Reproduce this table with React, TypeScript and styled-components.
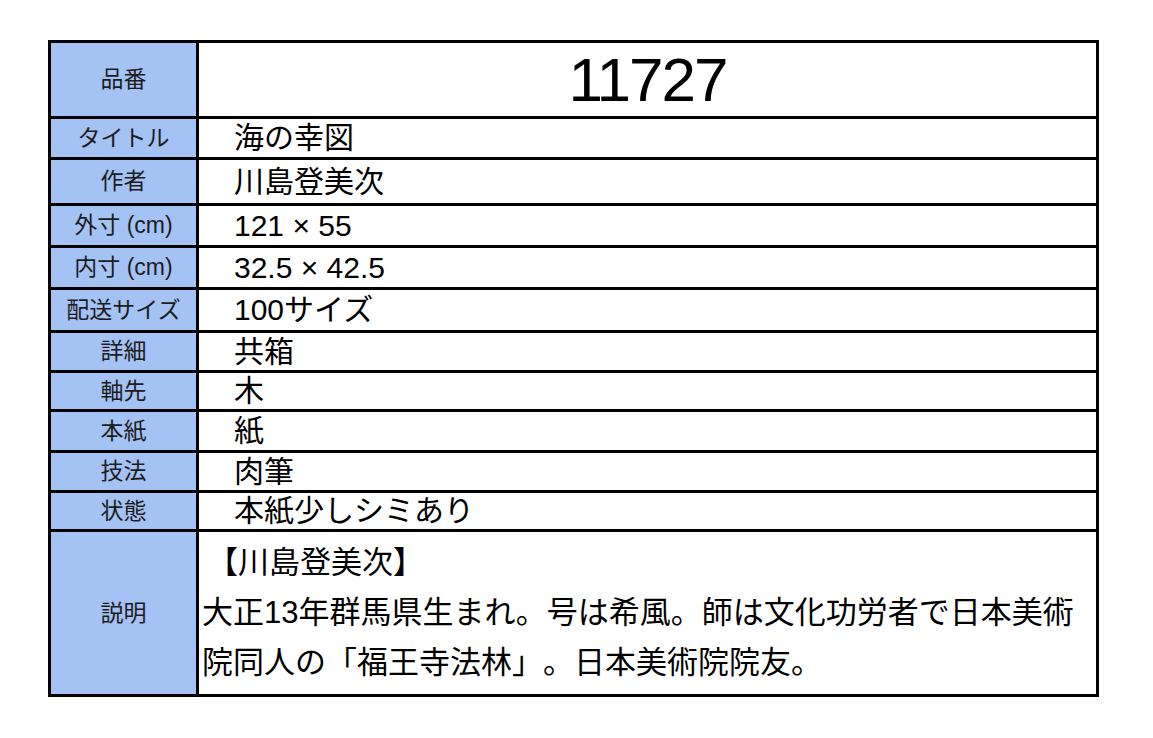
import React from "react";
import styled, { createGlobalStyle } from "styled-components";

const GlobalStyle = createGlobalStyle`
  html, body {
    margin: 0;
    padding: 0;
    background: #fff;
  }
  body {
    font-family: "Liberation Sans", "Noto Sans CJK JP", sans-serif;
    color: #000;
    text-spacing-trim: space-all;
  }
`;

type Row = { label: string; value: string; h: number };

const rows: Row[] = [
  { label: "タイトル", value: "海の幸図", h: 38 },
  { label: "作者", value: "川島登美次", h: 43 },
  { label: "外寸 (cm)", value: "121 × 55", h: 39 },
  { label: "内寸 (cm)", value: "32.5 × 42.5", h: 39 },
  { label: "配送サイズ", value: "100サイズ", h: 40 },
  { label: "詳細", value: "共箱", h: 37 },
  { label: "軸先", value: "木", h: 36 },
  { label: "本紙", value: "紙", h: 38 },
  { label: "技法", value: "肉筆", h: 37 },
  { label: "状態", value: "本紙少しシミあり", h: 36 },
];

const descLines = [
  "【川島登美次】",
  "大正13年群馬県生まれ。号は希風。師は文化功労者で日本美術",
  "院同人の「福王寺法林」。日本美術院院友。",
];

// heights of every row: number row, the plain rows, then the description
const rowHeights = [73, ...rows.map((r) => r.h), 162];

const App = () => {
  return (
    <Page>
      <GlobalStyle />
      <Sheet $rows={rowHeights}>
        <Label>品番</Label>
        <Number>11727</Number>

        {rows.map((r) => (
          <React.Fragment key={r.label}>
            <Label>{r.label}</Label>
            <Value>{r.value}</Value>
          </React.Fragment>
        ))}

        <Label>説明</Label>
        <Desc>
          {descLines.map((line, i) => (
            <DescLine key={line} $indent={i === 0 ? 5 : 0}>
              {line}
            </DescLine>
          ))}
        </Desc>
      </Sheet>
    </Page>
  );
};

export default App;

const Page = styled.div`
  padding: 40px 0 0 48px;
`;

const Sheet = styled.div<{ $rows: number[] }>`
  display: grid;
  grid-template-columns: 145px 897px;
  grid-template-rows: ${(p) => p.$rows.map((h) => `${h}px`).join(" ")};
  gap: 3px;
  padding: 3px;
  width: fit-content;
  background-color: #000;
`;

const Label = styled.div`
  display: flex;
  align-items: center;
  justify-content: center;
  min-height: 0;
  overflow: hidden;
  background-color: #a4c2f4;
  color: #1c1c1c;
  font-size: 23px;
  line-height: 1;
  white-space: nowrap;
`;

const Value = styled.div`
  display: flex;
  align-items: center;
  min-height: 0;
  overflow: hidden;
  background-color: #fff;
  padding-left: 35px;
  font-size: 30px;
  line-height: 1;
  white-space: nowrap;
`;

const Number = styled.div`
  display: flex;
  align-items: center;
  justify-content: center;
  min-height: 0;
  overflow: hidden;
  background-color: #fff;
  font-size: 62px;
  line-height: 1;
  letter-spacing: -2px;
`;

const Desc = styled.div`
  min-height: 0;
  overflow: hidden;
  background-color: #fff;
  padding: 6px 0 0 3px;
  font-size: 31px;
`;

const DescLine = styled.div<{ $indent: number }>`
  height: 50px;
  line-height: 50px;
  padding-left: ${(p) => p.$indent}px;
  white-space: nowrap;
`;
